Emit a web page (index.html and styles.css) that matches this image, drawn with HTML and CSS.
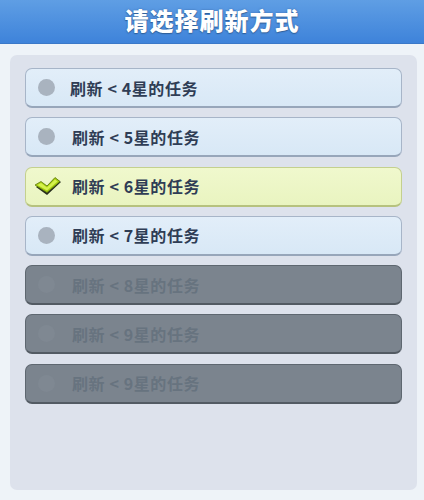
FILE: index.html
```html
<!DOCTYPE html>
<html>
<head>
<meta charset="utf-8">
<link rel="stylesheet" href="styles.css">
</head>
<body>
<div class="header"><span class="title">请选择刷新方式</span></div>
<div class="panel">
  <div class="opt"><span class="dot"></span><span class="label">刷新 &lt; 4星的任务</span></div>
  <div class="opt"><span class="dot"></span><span class="label shift">刷新 &lt; 5星的任务</span></div>
  <div class="opt sel">
    <svg class="check" width="28" height="22" viewBox="0 0 28 22">
      <path d="M2 12 L8 8 L13 11 L21 3 L27 7 L13 20 Z" fill="#262b1c"/>
      <path d="M1 10 L7 6.5 L13 11 L21 2.5 L26 6.5 L13 17.5 Z" fill="#a6cf12" stroke="#5f7a0c" stroke-width="0.8"/>
      <path d="M3.5 10 L7 8 L13 12.5 L21 4.5 L23.5 6.5 L13 15.5 Z" fill="#d6f24c"/>
    </svg>
    <span class="label shift">刷新 &lt; 6星的任务</span>
  </div>
  <div class="opt"><span class="dot"></span><span class="label shift">刷新 &lt; 7星的任务</span></div>
  <div class="opt dis"><span class="dot"></span><span class="label shift">刷新 &lt; 8星的任务</span></div>
  <div class="opt dis"><span class="dot"></span><span class="label shift">刷新 &lt; 9星的任务</span></div>
  <div class="opt dis"><span class="dot"></span><span class="label shift">刷新 &lt; 9星的任务</span></div>
</div>
</body>
</html>
```
FILE: styles.css
```css
html, body {
  margin: 0;
  padding: 0;
}
body {
  width: 424px;
  height: 500px;
  background: #eef3f8;
  font-family: "Noto Sans CJK SC", "Noto Sans", sans-serif;
  overflow: hidden;
}
.header {
  height: 43px;
  background: linear-gradient(#5f9ee4, #3e83da);
  display: flex;
  align-items: center;
  justify-content: center;
  border-bottom: 1px solid #3a78c8;
}
.title {
  color: #ffffff;
  font-size: 24px;
  font-weight: 900;
  letter-spacing: 1px;
  text-shadow: 0 1px 1px #2f5f99, 0 0 2px #3d6aa6;
  margin-top: -4px;
}
.panel {
  margin: 11px 7px 0 10px;
  height: 435px;
  background: #dde2ec;
  border-radius: 7px;
  padding: 13px 15px 0 15px;
  display: flex;
  flex-direction: column;
  gap: 9.3px;
  box-sizing: border-box;
}
.opt {
  height: 40px;
  flex: none;
  box-sizing: border-box;
  background: linear-gradient(#e2eef9, #d8e8f6);
  border: 1px solid #a7b5c8;
  border-bottom: 2px solid #97a6ba;
  border-radius: 7px;
  display: flex;
  align-items: center;
  padding-left: 12px;
}
.dot {
  width: 17px;
  height: 17px;
  border-radius: 50%;
  background: #a9b3bf;
  flex: none;
}
.label {
  margin-left: 15px;
  font-size: 16px;
  font-weight: 700;
  color: #2f3d55;
  letter-spacing: 0.6px;
}
.label.shift {
  margin-left: 17px;
}
.sel {
  background: linear-gradient(#f0f8cd, #e9f4c0);
  border-color: #c4d08e;
  border-bottom-color: #b6c27e;
  padding-left: 8px;
}
.sel .label {
  margin-left: 10px;
}
.check {
  flex: none;
}
.dis {
  background: #7b848e;
  border-color: #5e6770;
  border-bottom-color: #535b63;
}
.dis .dot {
  background: #7f8892;
}
.dis .label {
  color: #67737f;
}
```
